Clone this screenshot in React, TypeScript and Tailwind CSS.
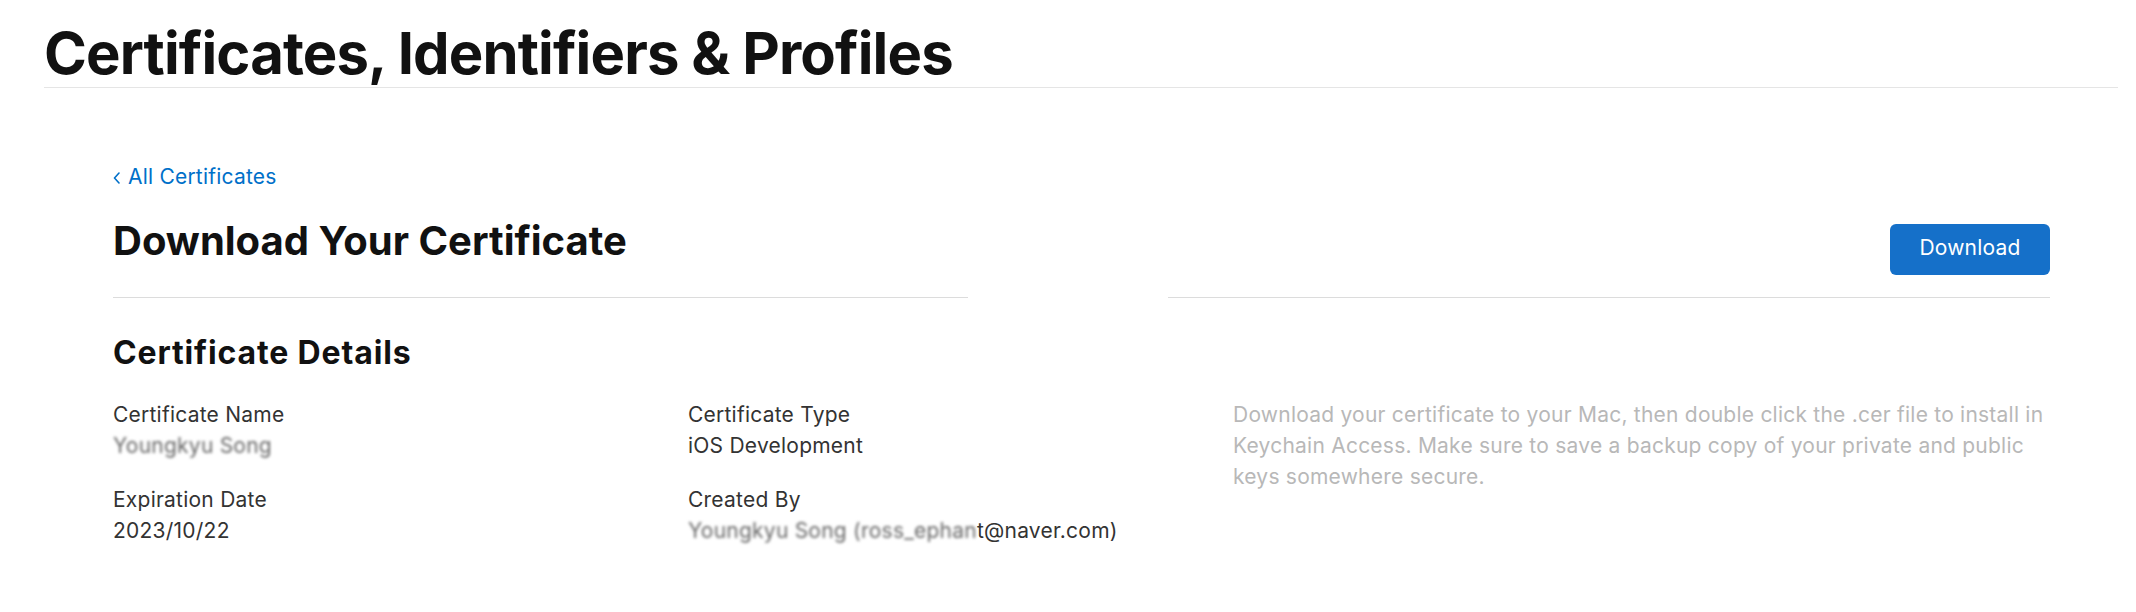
export default function App() {
  return (
    <div className="min-h-screen bg-white font-['Inter',sans-serif] text-[#333]">
      {/* Page header */}
      <header className="ml-[44px] mr-[18px] border-b border-[#e5e5e5] pt-[24px] pb-[5px]">
        <h1 className="text-[58px] font-bold leading-[58px] tracking-[-0.015em] text-[#111]">
          Certificates, Identifiers &amp; Profiles
        </h1>
      </header>

      <main className="pl-[113px] pr-[86px]">
        {/* Title row */}
        <div className="flex items-end">
          <div className="w-[855px] border-b border-[#dcdcdc] pb-[32px]">
            <a href="#" className="mt-[73px] flex items-center gap-[8px] text-[21px] leading-[31px] tracking-[0.01em] text-[#0070c9]">
              <svg width="7" height="12" viewBox="0 0 7 12" fill="none" className="mt-[2px]">
                <polyline points="6,1 1.5,6 6,11" stroke="#0070c9" strokeWidth="1.6" strokeLinecap="round" strokeLinejoin="round" />
              </svg>
              All Certificates
            </a>
            <h2 className="mt-[25px] text-[40px] font-bold leading-[48px] text-[#111]">
              Download Your Certificate
            </h2>
          </div>
          <div className="ml-[200px] flex flex-1 justify-end border-b border-[#dcdcdc] pb-[22px]">
            <button className="h-[51px] w-[160px] rounded-[6px] bg-[#1570c9] pb-[3px] text-[21px] tracking-[0.01em] text-white">
              Download
            </button>
          </div>
        </div>

        {/* Details */}
        <h3 className="mt-[37px] text-[32px] font-bold leading-[36px] tracking-[0.027em] text-[#111]">
          Certificate Details
        </h3>
        <div className="mt-[28px] grid grid-cols-[575px_545px_1fr] text-[21px] leading-[31px] tracking-[0.011em]">
          <div className="flex flex-col gap-[23px]">
            <div>
              <p>Certificate Name</p>
              <p className="text-[#666] blur-[1.4px]">Youngkyu Song</p>
            </div>
            <div>
              <p>Expiration Date</p>
              <p>2023/10/22</p>
            </div>
          </div>
          <div className="flex flex-col gap-[23px]">
            <div>
              <p>Certificate Type</p>
              <p>iOS Development</p>
            </div>
            <div>
              <p>Created By</p>
              <p className="whitespace-nowrap">
                <span className="text-[#666] blur-[1.4px]">Youngkyu Song (ross_ephan</span>
                t@naver.com)
              </p>
            </div>
          </div>
          <p className="whitespace-nowrap text-[#b8b8b8]">
            Download your certificate to your Mac, then double click the .cer file to install in
            <br />
            Keychain Access. Make sure to save a backup copy of your private and public
            <br />
            keys somewhere secure.
          </p>
        </div>
      </main>
    </div>
  );
}
